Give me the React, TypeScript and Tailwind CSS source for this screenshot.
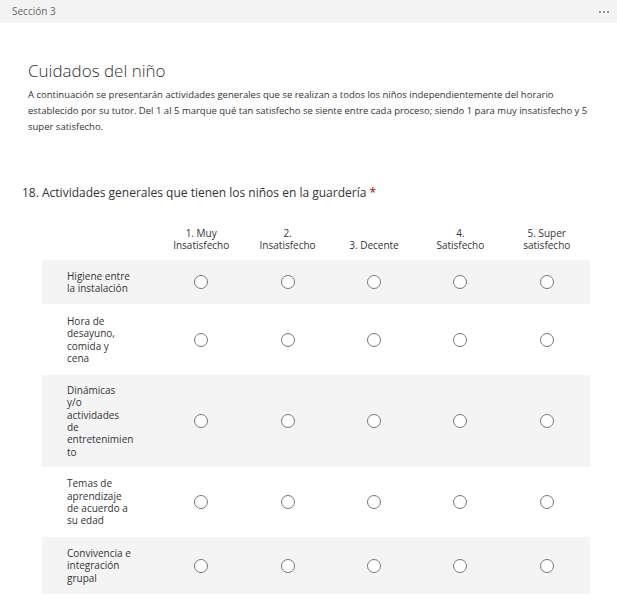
import React from "react";

const cols = ["1. Muy\nInsatisfecho", "2.\nInsatisfecho", "3. Decente", "4.\nSatisfecho", "5. Super\nsatisfecho"];
const rows = [
  { label: "Higiene entre\nla instalación", h: "h-[44px]", gray: true },
  { label: "Hora de\ndesayuno,\ncomida y\ncena", h: "h-[71px]", gray: false },
  { label: "Dinámicas\ny/o\nactividades\nde\nentretenimien\nto", h: "h-[92px]", gray: true },
  { label: "Temas de\naprendizaje\nde acuerdo a\nsu edad", h: "h-[70px]", gray: false },
  { label: "Convivencia e\nintegración\ngrupal", h: "h-[57px]", gray: true },
];

export default function App() {
  return (
    <div className="w-[617px] h-[610px] bg-white overflow-hidden text-[#333]" style={{ fontFamily: '"Open Sans", "Noto Sans", sans-serif' }}>
      <div className="h-[23px] bg-[#f3f3f3] flex items-center justify-between pl-[12px] pr-[8px]">
        <span className="text-[10px] text-[#666]">Sección 3</span>
        <span className="flex gap-[2px] items-center">
          <span className="w-[2px] h-[2px] bg-[#777] rounded-full" />
          <span className="w-[2px] h-[2px] bg-[#777] rounded-full" />
          <span className="w-[2px] h-[2px] bg-[#777] rounded-full" />
        </span>
      </div>
      <div className="pl-[28px] pr-[24px] pt-[36px]">
        <h1 className="text-[17px] leading-[24px] font-light text-[#333]">Cuidados del niño</h1>
        <p className="mt-[4px] text-[9.5px] leading-[16px] text-[#333]">
          A continuación se presentarán actividades generales que se realizan a todos los niños independientemente del horario establecido por su tutor. Del 1 al 5 marque qué tan satisfecho se siente entre cada proceso; siendo 1 para muy insatisfecho y 5 super satisfecho.
        </p>
      </div>
      <div className="pl-[22px] mt-[49px]">
        <div className="text-[12px] leading-[18px] text-[#333]">
          18. Actividades generales que tienen los niños en la guardería <span className="text-[#a80000]">*</span>
        </div>
      </div>
      <div className="ml-[42px] w-[548px] mt-[25px]">
        <div className="flex items-end pb-[9px]">
          <div className="w-[116px]" />
          {cols.map((c) => (
            <div key={c} className="w-[86.4px] text-center text-[10px] leading-[12px] whitespace-pre-line">
              {c}
            </div>
          ))}
        </div>
        {rows.map((r) => (
          <div key={r.label} className={`flex items-center ${r.h} ${r.gray ? "bg-[#f4f4f4]" : "bg-white"}`}>
            <div className="w-[116px] pl-[25px] text-[10px] leading-[12.3px] whitespace-pre-line">{r.label}</div>
            {cols.map((c) => (
              <div key={c} className="w-[86.4px] flex justify-center">
                <span className="w-[14px] h-[14px] rounded-full border border-[#777] bg-white" />
              </div>
            ))}
          </div>
        ))}
      </div>
    </div>
  );
}
